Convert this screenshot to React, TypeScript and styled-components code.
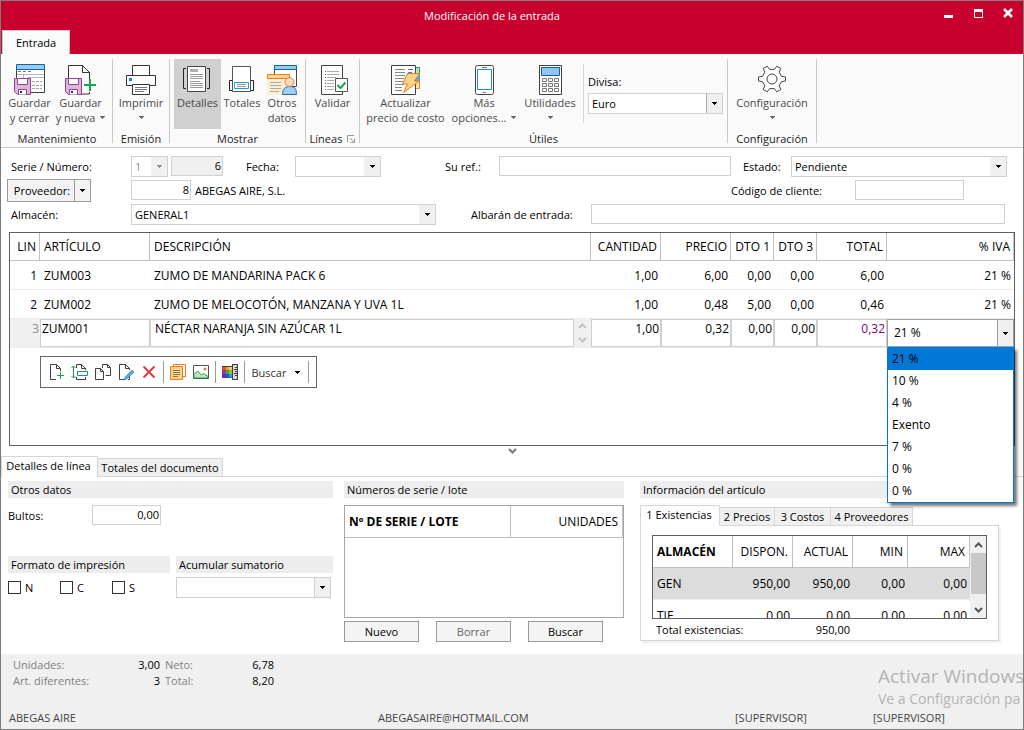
import React from "react";
import styled, { createGlobalStyle, css } from "styled-components";

const FONT = '"Open Sans", "Noto Sans", sans-serif';

const Global = createGlobalStyle`
  *, *::before, *::after { box-sizing: border-box; }
  html, body { margin: 0; padding: 0; }
  body { background: #fff; color: #000; font-family: ${FONT}; font-size: 11px; line-height: 15px; }
  button, input, select, textarea { font: inherit; color: inherit; margin: 0; border-radius: 0; }
`;

/* ---------- window frame ---------- */

const Window = styled.div`
  display: flex;
  flex-direction: column;
  min-height: 100vh;
  border: 1px solid #7d7d7d;
  background: #fff;
`;

const TitleBar = styled.header`
  display: grid;
  grid-template-columns: 1fr auto 1fr;
  height: 29px;
  color: #fff;
  background: #c8002d;
`;

const Title = styled.h1`
  grid-column: 2;
  margin: 0;
  padding-right: 40px;
  font-size: 11px;
  font-weight: 400;
  line-height: 29px;
`;

const WindowButtons = styled.div`
  display: flex;
  justify-content: flex-end;
  align-items: flex-start;
`;

const WindowButton = styled.button`
  width: 30px;
  height: 24px;
  padding: 0;
  border: 0;
  background: none;
  display: flex;
  align-items: center;
  justify-content: center;
`;

const RibbonTabs = styled.nav`
  display: flex;
  height: 24px;
  padding-left: 1px;
  background: #c8002d;
`;

const RibbonTab = styled.button`
  width: 68px;
  border: 1px solid #c8c8c8;
  border-bottom: 0;
  background: #fafafa;
  padding: 0;
`;

/* ---------- ribbon ---------- */

const Ribbon = styled.div`
  display: flex;
  height: 94px;
  padding: 5px 0 4px 1px;
  background: #fafafa;
  border-bottom: 1px solid #c6c6c6;
`;

const Group = styled.section<{ $w: number }>`
  display: flex;
  flex-direction: column;
  flex: none;
  width: ${(p) => p.$w}px;
  border-right: 1px solid #c9c9c9;
`;

const GroupBody = styled.div<{ $start?: boolean }>`
  display: flex;
  flex: 1;
  justify-content: ${(p) => (p.$start ? "flex-start" : "center")};
  padding-left: ${(p) => (p.$start ? 2 : 0)}px;
`;

const GroupLabel = styled.h2`
  display: flex;
  justify-content: center;
  align-items: center;
  gap: 5px;
  margin: 0;
  font-size: 11px;
  font-weight: 400;
  line-height: 8px;
  color: #222;
`;

const ToolButton = styled.button<{ $w: number; $on?: boolean }>`
  display: flex;
  flex-direction: column;
  align-items: center;
  width: ${(p) => p.$w}px;
  height: 70px;
  margin: 0;
  padding: 4px 0 0;
  border: 0;
  background: ${(p) => (p.$on ? "#d0d0d0" : "transparent")};
  color: #4a4a4a;
  line-height: 15px;
  white-space: nowrap;
  svg { flex: none; display: block; }
`;

const ToolCaption = styled.span`
  display: flex;
  align-items: center;
  gap: 5px;
  min-height: 15px;
`;

const CurrencyBox = styled.div`
  display: flex;
  flex-direction: column;
  justify-content: center;
  gap: 4px;
  width: 144px;
  height: 59px;
  margin-top: 5px;
  padding: 0 5px 0 4px;
  border-left: 1px solid #d8d8d8;
`;

/* ---------- form controls ---------- */

const fieldBox = css`
  border: 1px solid #d0d0d0;
  background: #fff;
`;

const Field = styled.input<{ $w?: number; $right?: boolean }>`
  ${fieldBox}
  ${(p) => (p.$w ? `flex: none; width: ${p.$w}px;` : "flex: 1; min-width: 0; width: 0;")}
  height: 20px;
  padding: 0 1px 1px 3px;
  text-align: ${(p) => (p.$right ? "right" : "left")};
  outline: none;
  &:read-only { background: #f0f0f0; }
`;

const ComboShell = styled.span<{ $w?: number }>`
  ${fieldBox}
  display: grid;
  grid-template: 1fr / 1fr;
  ${(p) => (p.$w ? `flex: none; width: ${p.$w}px;` : "flex: 1;")}
  height: 21px;
`;

const ComboSelect = styled.select`
  grid-area: 1 / 1;
  appearance: none;
  width: 100%;
  min-width: 0;
  padding: 0 18px 0 3px;
  border: 0;
  background: none;
  outline: none;
  &:disabled { color: #8a8a8a; opacity: 1; }
`;

const ComboArrow = styled.span<{ $line?: string }>`
  grid-area: 1 / 1;
  justify-self: end;
  display: flex;
  align-items: center;
  justify-content: center;
  width: 16px;
  pointer-events: none;
  background: #f0f0f0;
  border-left: ${(p) => (p.$line ? `1px solid ${p.$line}` : "0")};
`;

const Caret = ({ color = "#000" }: { color?: string }) => (
  <svg width="5" height="3" viewBox="0 0 5 3" aria-hidden="true" shapeRendering="crispEdges">
    <path d="M0 0h5v1H0zM1 1h3v1H1zM2 2h1v1H2z" fill={color} />
  </svg>
);

interface ComboProps {
  id: string;
  w?: number;
  value?: string;
  disabled?: boolean;
  line?: string;
  label?: string;
}

const Combo = ({ id, w, value = "", disabled, line, label }: ComboProps) => (
  <ComboShell $w={w}>
    <ComboSelect id={id} defaultValue={value} disabled={disabled} aria-label={label}>
      <option>{value}</option>
    </ComboSelect>
    <ComboArrow $line={line}>
      <Caret color={disabled ? "#8a8a8a" : "#000"} />
    </ComboArrow>
  </ComboShell>
);

const Form = styled.form`
  display: flex;
  flex-direction: column;
  padding: 6px 16px 0 10px;
`;

const FormRow = styled.div<{ $inset?: number }>`
  display: flex;
  align-items: center;
  height: 24px;
  padding-right: ${(p) => p.$inset ?? 0}px;
`;

const Label = styled.label<{ $w: number; $ml?: number }>`
  flex: none;
  width: ${(p) => p.$w}px;
  margin-left: ${(p) => p.$ml ?? 0}px;
  white-space: nowrap;
`;

const SeriesPair = styled.span`
  display: flex;
  align-items: center;
  gap: 3px;
`;

const SupplierName = styled.output`
  flex: 1;
  margin-left: 4px;
`;

const SplitButton = styled.div`
  display: flex;
  width: 84px;
  height: 23px;
  margin: 0 40px 0 -4px;
  border: 1px solid #9a9a9a;
  background: #f3f3f3;
`;

const SplitPart = styled.button`
  flex: 1;
  padding: 0 0 0 2px;
  border: 0;
  background: none;
  display: flex;
  align-items: center;
  justify-content: center;
  & + & { flex: none; width: 16px; padding: 0; border-left: 1px solid #9a9a9a; }
`;

/* ---------- lines grid ---------- */

const LinesBox = styled.section`
  flex: 1 0 214px;
  margin: 6px 8px 0;
  border: 1px solid #5f5f5f;
`;

const LinesTable = styled.table`
  width: 100%;
  table-layout: fixed;
  border-collapse: separate;
  border-spacing: 0;
  font-size: 12px;
  th {
    height: 28px;
    padding: 0 4px;
    border-right: 1px solid #c0c0c0;
    border-bottom: 1px solid #c0c0c0;
    font-weight: 400;
    text-align: left;
    white-space: nowrap;
  }
  td {
    height: 29px;
    padding: 0 4px;
    border-bottom: 1px solid #ececec;
    white-space: nowrap;
  }
  .num { text-align: right; padding-right: 3px; }
`;

const EditRow = styled.tr`
  td {
    padding: 0;
    background: #f0f0f0;
    vertical-align: top;
  }
`;

const EditNumber = styled.div`
  padding: 2px 1px 0 0;
  text-align: right;
  color: #8a8a8a;
`;

const CellInput = styled.input<{ $num?: boolean; $color?: string }>`
  ${fieldBox}
  display: block;
  width: 100%;
  height: 28px;
  padding: 0 1px 9px;
  border-color: #cfcfcf;
  outline: none;
  text-align: ${(p) => (p.$num ? "right" : "left")};
  color: ${(p) => p.$color ?? "#000"};
`;

const DescriptionCell = styled.div`
  display: flex;
`;

const DescriptionText = styled.textarea`
  ${fieldBox}
  flex: 1;
  display: block;
  height: 28px;
  padding: 1px 4px;
  resize: none;
  outline: none;
  overflow: hidden;
`;

const Spinner = styled.div`
  display: flex;
  flex-direction: column;
  align-items: center;
  justify-content: space-around;
  width: 17px;
`;

const VatCell = styled.div`
  position: relative;
`;

const VatCombo = styled.button`
  display: flex;
  align-items: stretch;
  justify-content: space-between;
  width: 100%;
  height: 28px;
  padding: 0 0 0 6px;
  border: 1px solid #a0a0a0;
  background: #fff;
  line-height: 26px;
`;

const VatArrow = styled.span`
  display: flex;
  align-items: center;
  justify-content: center;
  width: 16px;
  border-left: 1px solid #a0a0a0;
  background: #f0f0f0;
`;

const VatList = styled.ul`
  position: absolute;
  z-index: 2;
  top: 28px;
  left: 0;
  right: 0;
  margin: 0;
  padding: 0;
  list-style: none;
  border: 1px solid #0078d7;
  background: #fff;
  box-shadow: 3px 3px 3px rgba(0, 0, 0, 0.55);
`;

const VatOption = styled.li<{ $active?: boolean }>`
  height: 22px;
  padding-left: 4px;
  line-height: 22px;
  background: ${(p) => (p.$active ? "#0078d7" : "transparent")};
`;

const LineTools = styled.div`
  display: inline-flex;
  align-items: center;
  height: 32px;
  margin: 8px 0 0 30px;
  padding: 0 5px 0 4px;
  border: 1px solid #666;
  vertical-align: top;
`;

const LineTool = styled.button<{ $w?: number }>`
  display: flex;
  align-items: center;
  justify-content: center;
  width: ${(p) => p.$w ?? 23}px;
  height: 24px;
  padding: 0;
  gap: 9px;
  border: 0;
  background: none;
  color: #333;
`;

const ToolRule = styled.span`
  width: 1px;
  height: 22px;
  margin: 0 2px 0 3px;
  background: #9b9b9b;
`;

const Collapse = styled.button`
  display: flex;
  align-items: center;
  justify-content: center;
  height: 10px;
  padding: 0;
  border: 0;
  background: none;
`;

/* ---------- tabs ---------- */

const TabStrip = styled.div`
  display: flex;
  align-items: flex-end;
  height: 21px;
  border-bottom: 1px solid #d6d6d6;
`;

const Tab = styled.button<{ $w: number; $on?: boolean }>`
  width: ${(p) => p.$w}px;
  height: ${(p) => (p.$on ? 21 : 18)}px;
  margin-bottom: ${(p) => (p.$on ? -1 : 0)}px;
  padding: ${(p) => (p.$on ? "0 2px 3px 0" : "0")};
  border: 1px solid #d6d6d6;
  border-bottom: 0;
  border-left-width: ${(p) => (p.$on ? 1 : 0)}px;
  background: ${(p) => (p.$on ? "#fff" : "#f0f0f0")};
  white-space: nowrap;
`;

/* ---------- bottom panels ---------- */

const Panels = styled.div`
  display: grid;
  grid-template-columns: 325fr 280fr 364fr;
  column-gap: 11px;
  padding: 4px 24px 12px 7px;
`;

const Panel = styled.section<{ $indent?: boolean }>`
  display: flex;
  flex-direction: column;
  min-width: 0;
  padding-left: ${(p) => (p.$indent ? 5 : 0)}px;
`;

const PanelTitle = styled.h3`
  margin: 0;
  padding-left: 3px;
  font-size: 11px;
  font-weight: 400;
  line-height: 17px;
  background: #ededed;
`;

const PackagesRow = styled.div`
  display: flex;
  align-items: center;
  height: 34px;
`;

const HalfColumns = styled.div`
  display: grid;
  grid-template-columns: 162fr 157fr;
  column-gap: 6px;
  margin-top: 24px;
`;

const Checks = styled.div`
  display: flex;
  padding-top: 8px;
`;

const CheckLabel = styled.label`
  display: flex;
  align-items: center;
  gap: 4px;
  width: 52px;
  height: 13px;
`;

const CheckBox = styled.input`
  appearance: none;
  width: 13px;
  height: 13px;
  border: 1px solid #333;
  background: #fff;
`;

const SumRow = styled.div`
  display: flex;
  padding: 4px 2px 0 0;
`;

const SerialBox = styled.div`
  height: 113px;
  margin-top: 7px;
  border: 1px solid #a6a6a6;
`;

const DataTable = styled.table`
  width: 100%;
  table-layout: fixed;
  border-collapse: separate;
  border-spacing: 0;
  font-size: 12px;
  th {
    height: 32px;
    padding: 0 4px;
    border-right: 1px solid #c0c0c0;
    border-bottom: 1px solid #c0c0c0;
    font-weight: 400;
    text-align: right;
    white-space: nowrap;
  }
  th:first-child { font-weight: 700; text-align: left; }
  td { height: 32px; padding: 0 3px; text-align: right; border-bottom: 1px solid #ececec; }
  td:first-child { text-align: left; padding-left: 4px; }
`;

const SelectedRow = styled.tr`
  td { background: #dcdcdc; }
`;

const ButtonRow = styled.div`
  display: flex;
  gap: 17px;
  margin-top: 3px;
`;

const PushButton = styled.button`
  width: 75px;
  height: 21px;
  padding: 0;
  border: 1px solid #999;
  background: #f4f4f4;
  &:disabled { color: #666; }
`;

const InnerTabs = styled(TabStrip)`
  margin-top: 7px;
`;

const StockBox = styled.div`
  padding: 9px 11px 1px;
  border: 1px solid #d6d6d6;
  border-top: 0;
  box-shadow: 2px 2px 0 #f0f0f0;
`;

const StockGrid = styled.div`
  display: flex;
  height: 84px;
  overflow: hidden;
  border: 1px solid #5f5f5f;
`;

const StockScroll = styled.div`
  flex: 1;
  min-width: 0;
  overflow: hidden;
`;

const ScrollBar = styled.div`
  display: flex;
  flex-direction: column;
  justify-content: space-between;
  align-items: center;
  width: 16px;
  background: #f0f0f0;
`;

const ScrollStep = styled.button`
  display: flex;
  align-items: center;
  justify-content: center;
  width: 15px;
  height: 17px;
  padding: 0;
  border: 0;
  background: none;
`;

const ScrollThumb = styled.div`
  width: 15px;
  height: 41px;
  margin-bottom: 7px;
  background: #c8c8c8;
`;

const StockTotal = styled.div`
  display: flex;
  height: 20px;
  padding-left: 4px;
  line-height: 22px;
`;

const TotalText = styled.span`
  flex: none;
  width: 130px;
`;

const TotalValue = styled.output`
  flex: none;
  width: 64px;
  text-align: right;
`;

/* ---------- footer ---------- */

const Footer = styled.footer`
  position: relative;
  display: flex;
  flex-direction: column;
  justify-content: space-between;
  height: 75px;
  padding: 3px 0 4px 8px;
  background: #f0f0f0;
`;

const Summary = styled.dl`
  display: grid;
  grid-template-columns: 88px 59px 50px 64px;
  margin: 0 0 0 4px;
  line-height: 16px;
  dt { color: #808080; white-space: nowrap; }
  dt:nth-of-type(even) { padding-left: 5px; }
  dd { margin: 0; text-align: right; }
`;

const Status = styled.div`
  display: grid;
  grid-template-columns: 369fr 357fr 138fr 150fr;
  color: #444;
`;

const Watermark = styled.div`
  position: absolute;
  top: 10px;
  right: 0;
  width: 145px;
  overflow: hidden;
  white-space: nowrap;
  color: #b4b4b4;
  font-size: 14px;
  line-height: 22px;
  strong { display: block; font-size: 19px; font-weight: 400; line-height: 24px; }
`;

/* ---------- icons ---------- */

const Chevron = ({ up, color }: { up?: boolean; color: string }) => (
  <svg width="9" height="6" viewBox="0 0 9 6" fill="none" stroke={color} strokeWidth="2" aria-hidden="true">
    <path d={up ? "M1 5l3.500-3.500L8 5" : "M1 1l3.500 3.500L8 1"} />
  </svg>
);

const Big = ({ children }: { children: React.ReactNode }) => (
  <svg width="32" height="32" viewBox="0 0 32 32" fill="none" aria-hidden="true">{children}</svg>
);

const Floppy = () => (
  <>
    <path d="M.5 15.500h16v16H3.500l-3-3z" fill="#dcb4dc" stroke="#93449a" />
    <path d="M3.500 15.500h10v6h-10z" fill="#fff" stroke="#93449a" />
    <path d="M4.500 31.500v-5h8v5" fill="#fff" stroke="#93449a" />
    <path d="M6 28h2v2H6z" fill="#333" />
  </>
);

const IconSaveClose = () => (
  <Big>
    <path d="M2.500 6.500h28v23h-28z" fill="#fff" stroke="#404040" />
    <path d="M2.500 1.500h28v5h-28z" fill="#9ccbf0" stroke="#0a64ae" />
    <path d="M4 8.500h3M9 8.500h3M14 8.500h3" stroke="#777" />
    <path d="M3 11.500h27M9.500 12v4M14 14.500h16" stroke="#b5b5b5" />
    <path d="M18 18.500h10M18 22.500h10M18 25.500h10" stroke="#a5a5a5" strokeDasharray="3 1" />
    <Floppy />
  </Big>
);

const IconSaveNew = () => (
  <Big>
    <path d="M3.500 31V2.500h14l7 7V31z" fill="#fff" stroke="#333" />
    <path d="M17.500 2.500v7h7z" fill="#fff" stroke="#333" />
    <path d="M23 16h8v13h-8z" fill="#fafafa" />
    <Floppy />
    <path d="M19 22h12M25 16v12" stroke="#12a84c" strokeWidth="2" />
  </Big>
);

const IconPrint = () => (
  <Big>
    <path d="M7.500 12V2.500h17V12" fill="#fff" stroke="#333" />
    <path d="M1.500 12.500h29v10h-29z" fill="#fff" stroke="#333" />
    <path d="M4 15h3v3H4z" fill="#1e82cf" />
    <path d="M7.500 21.500h17v10h-17z" fill="#fff" stroke="#333" />
    <path d="M10 24.500h12M10 26.500h12M10 28.500h9" stroke="#777" />
  </Big>
);

const IconDetails = () => (
  <Big>
    <path d="M5.500 3.500h18v25h-18z" fill="#fff" stroke="#444" />
    <path d="M4 5.500H1.500v20H4M25 5.500h2.500v20H25" stroke="#222" />
    <path d="M8 6h8v3H8z" fill="#b0b0b0" />
    <path d="M8 11.500h13M8 13.500h13M8 15.500h13M8 18.500h10M8 20.500h13M8 22.500h13M8 24.500h13" stroke="#999" />
  </Big>
);

const IconTotals = () => (
  <Big>
    <path d="M6.500 3.500h18v25h-18z" fill="#fff" stroke="#555" />
    <path d="M6 17.500H3.500v10H6M25 17.500h2.500v10H25" stroke="#222" />
    <path d="M8.500 19.500h14v6h-14z" fill="#fff" stroke="#1e9be6" />
    <path d="M11 21.500h9M11 23.500h9" stroke="#999" />
  </Big>
);

const IconOther = () => (
  <Big>
    <path d="M8.500 3.500h22v20h-22z" fill="#fff" stroke="#444" />
    <path d="M8.500 2.500h22v4h-22z" fill="#9ccbf0" stroke="#0a64ae" />
    <path d="M1 12h22v20H1z" fill="#fbeed3" />
    <path d="M1.500 11.500h22v4h-22z" fill="#fbd48b" stroke="#ea7a22" />
    <path d="M4 19.500h11M4 22.500h11M4 25.500h11M4 28.500h9" stroke="#aaa" />
    <path d="M16.500 31.500c0-6 3-8 7.500-8s6.500 2 6.500 8z" fill="#a3cef0" stroke="#1c70b8" />
    <circle cx="23.500" cy="19" r="4.500" fill="#fbd9bd" stroke="#c98a5a" />
  </Big>
);

const IconValidate = () => (
  <Big>
    <path d="M4.500 2.500h21v29h-21z" fill="#fff" stroke="#444" />
    <path d="M8 8.500h1M8 17.500h1M8 26.500h1" stroke="#12a84c" />
    <path d="M8 11.500h1M8 14.500h1M8 20.500h1M8 23.500h1" stroke="#e02b2b" />
    <path d="M10 8.500h12M10 11.500h12M10 14.500h9M10 17.500h7M10 20.500h7M10 23.500h7M10 26.500h7" stroke="#aaa" />
    <path d="M18.500 15.500h12v13h-12z" fill="#fff" stroke="#555" />
    <path d="M20.500 22l3 3 5-5.500" stroke="#12a84c" strokeWidth="2" />
  </Big>
);

const IconUpdate = () => (
  <Big>
    <path d="M20 4.500h9.500v7H20z" fill="#b7e3bd" stroke="#1f9a45" />
    <path d="M20 11h10v8H20z" fill="#52a8ec" />
    <path d="M20.500 18.500h9v7h-9z" fill="#fde3a5" stroke="#ea8a22" />
    <path d="M1.500 2.500h24v29h-24z" fill="#fff" stroke="#404040" />
    <path d="M5 6.500h10M5 9.500h10M5 12.500h10M5 15.500h9M5 18.500h8M5 21.500h9M5 24.500h7M5 27.500h7" stroke="#888" />
    <path d="M18 6.500h5M18 9.500h4" stroke="#2b83c8" />
    <path d="M17.500 10.500h12l-5 7.500h5L13.500 29.500l4-8.500h-5z" fill="#fbd48b" stroke="#ea7a22" />
  </Big>
);

const IconPhone = () => (
  <Big>
    <rect x="7.500" y="2.500" width="18" height="29" rx="2" fill="#fff" stroke="#444" />
    <path d="M9.500 6.500h14v20h-14z" fill="#fff" stroke="#1e88d8" />
    <path d="M14 4.500h5M15 29.500h3" stroke="#777" />
  </Big>
);

const IconCalc = () => (
  <Big>
    <path d="M5.500 2.500h22v29h-22z" fill="#fff" stroke="#404040" />
    <path d="M7.500 4.500h18v8h-18z" fill="#92c6ee" stroke="#0a64ae" />
    <path
      d="M8.500 15.500h4v3h-4zM14.500 15.500h4v3h-4zM20.500 15.500h4v3h-4zM8.500 20.500h4v3h-4zM14.500 20.500h4v3h-4zM20.500 20.500h4v3h-4zM8.500 25.500h4v3h-4zM14.500 25.500h4v3h-4zM20.500 25.500h4v3h-4z"
      stroke="#777"
    />
  </Big>
);

const IconGear = () => (
  <Big>
    <path
      d="M29.500 14V18L25.500 18.700L23.100 22.900L24.800 26.500L20.800 28.800L18.400 25.600H13.600L11.200 28.800L7.200 26.500L8.900 22.900L6.500 18.700L2.500 18V14L6.500 13.300L8.900 9.100L7.200 5.500L11.200 3.200L13.600 6.400H18.400L20.800 3.200L24.800 5.500L23.100 9.100L25.500 13.300Z"
      fill="#fff" stroke="#444" strokeLinejoin="round"
    />
    <circle cx="16" cy="16" r="5" fill="#fafafa" stroke="#444" />
  </Big>
);

const Small = ({ children }: { children: React.ReactNode }) => (
  <svg width="18" height="18" viewBox="0 0 18 18" fill="none" aria-hidden="true">{children}</svg>
);

const IconAdd = () => (
  <Small>
    <path d="M8 16.500H2.500v-15h6l4 4V8M8.500 1.500v4h4" stroke="#404040" />
    <path d="M9 12.500h7M12.500 9v7" stroke="#12a84c" />
  </Small>
);
const IconInsert = () => (
  <Small>
    <path d="M5.500 5V1.500h5l4 4V7M10.500 1.500v4h4M5.500 14v2.500h9V14" stroke="#404040" />
    <path d="M6.500 8.500h10v4h-10z" fill="#fff" stroke="#1e82cf" />
    <path d="M2.500 3v12M.5 5l2-2 2 2M.5 13l2 2 2-2" stroke="#12a84c" />
  </Small>
);
const IconCopy = () => (
  <Small>
    <path d="M8.500 5V1.500h5l3 3v8h-5M13.500 1.500v3h3" stroke="#404040" />
    <path d="M1.500 5.500h5l3 3v8h-8zM6.500 5.500v3h3" fill="#fff" stroke="#404040" />
  </Small>
);
const IconEdit = () => (
  <Small>
    <path d="M8 16.500H2.500v-15h6l4 4V7M8.500 1.500v4h4M12.500 13v3.500H11" stroke="#404040" />
    <path d="M8 14l7-7 2 2-7 7-3 1z" fill="#5aa7e0" stroke="#1e78c0" strokeWidth=".5" />
  </Small>
);
const IconDelete = () => (
  <Small>
    <path d="M3.500 3.500l11 11M14.500 3.500l-11 11" stroke="#e83a3a" strokeWidth="2" />
  </Small>
);
const IconNotes = () => (
  <Small>
    <path d="M4.500 3V1.500h12v12H14" stroke="#ea7a22" />
    <path d="M1.500 3.500h12v13h-12z" fill="#fbd48b" stroke="#ea7a22" />
    <path d="M4 7.500h7M4 9.500h7M4 11.500h7M4 13.500h5" stroke="#8a7650" />
  </Small>
);
const IconImage = () => (
  <Small>
    <path d="M1.500 2.500h15v13h-15z" fill="#fff" stroke="#505050" />
    <path d="M2 11.500l3.500-3.500 4 4 2-1.500 4.500 3V15H2z" fill="#bfe6c4" stroke="#1f9a45" />
    <circle cx="13" cy="6" r="1.500" fill="#ea7a22" />
  </Small>
);
const IconColors = () => (
  <Small>
    <path d="M1 3h11v12H1zM11 1h6v16h-6z" fill="#404040" />
    <path d="M1 4h3.500v3.500H1z" fill="#ef4030" />
    <path d="M4.500 4H8v3.500H4.500z" fill="#f59a23" />
    <path d="M8 4h3v3.500H8z" fill="#f7d83b" />
    <path d="M1 7.500h3.500V11H1z" fill="#a02bb0" />
    <path d="M4.500 7.500H8V11H4.500z" fill="#2fb04a" />
    <path d="M8 7.500h3V11H8z" fill="#8cc63f" />
    <path d="M1 11h3.500v3.500H1z" fill="#6a2bd0" />
    <path d="M4.500 11H8v3.500H4.500z" fill="#2b4fd0" />
    <path d="M8 11h3v3.500H8z" fill="#25a0e0" />
    <path d="M12 2h4v14h-4z" fill="#d5d5d5" />
    <path d="M14 4.500h2M13 6.500h3M14 8.500h2M13 10.500h3M14 12.500h2" stroke="#404040" />
  </Small>
);

/* ---------- data ---------- */

const vatRates = ["21 %", "10 %", "4 %", "Exento", "7 %", "0 %", "0 %"];

const lines = [
  ["1", "ZUM003", "ZUMO DE MANDARINA PACK 6", "1,00", "6,00", "0,00", "0,00", "6,00", "21 %"],
  ["2", "ZUM002", "ZUMO DE MELOCOTÓN, MANZANA Y UVA 1L", "1,00", "0,48", "5,00", "0,00", "0,46", "21 %"],
];

const columns = [
  { name: "LIN", w: 30, num: true },
  { name: "ARTÍCULO", w: 110 },
  { name: "DESCRIPCIÓN" },
  { name: "CANTIDAD", w: 70, num: true },
  { name: "PRECIO", w: 70, num: true },
  { name: "DTO 1", w: 43, num: true },
  { name: "DTO 3", w: 43, num: true },
  { name: "TOTAL", w: 70, num: true },
  { name: "% IVA", w: 127, num: true },
];

interface ToolProps {
  icon: React.ReactNode;
  first: string;
  second?: string;
  w: number;
  menu?: boolean;
  on?: boolean;
}

const Tool = ({ icon, first, second, w, menu, on }: ToolProps) => (
  <ToolButton type="button" $w={w} $on={on} aria-pressed={on}>
    {icon}
    <ToolCaption>{first}</ToolCaption>
    <ToolCaption>
      {second}
      {menu && <Caret color="#6a6a6a" />}
    </ToolCaption>
  </ToolButton>
);

export default function App() {
  return (
    <Window>
      <Global />
      <TitleBar>
        <Title>Modificación de la entrada</Title>
        <WindowButtons>
          <WindowButton aria-label="Minimizar">
            <svg width="9" height="10" viewBox="0 0 9 10"><path d="M0 7h9v3H0z" fill="#fff" /></svg>
          </WindowButton>
          <WindowButton aria-label="Maximizar">
            <svg width="9" height="10" viewBox="0 0 9 10"><path d="M0 1h9v9H0zM1 4v5h7V4z" fill="#fff" fillRule="evenodd" /></svg>
          </WindowButton>
          <WindowButton aria-label="Cerrar">
            <svg width="10" height="10" viewBox="0 0 10 10"><path d="M1 1l8 8M9 1L1 9" stroke="#fff" strokeWidth="2.500" /></svg>
          </WindowButton>
        </WindowButtons>
      </TitleBar>
      <RibbonTabs>
        <RibbonTab>Entrada</RibbonTab>
      </RibbonTabs>

      <Ribbon>
        <Group $w={111}>
          <GroupBody $start>
            <Tool icon={<IconSaveClose />} first="Guardar" second="y cerrar" w={51} />
            <Tool icon={<IconSaveNew />} first="Guardar" second="y nueva" w={51} menu />
          </GroupBody>
          <GroupLabel>Mantenimiento</GroupLabel>
        </Group>
        <Group $w={57}>
          <GroupBody>
            <Tool icon={<IconPrint />} first="Imprimir" w={50} menu />
          </GroupBody>
          <GroupLabel>Emisión</GroupLabel>
        </Group>
        <Group $w={136}>
          <GroupBody>
            <Tool icon={<IconDetails />} first="Detalles" w={47} on />
            <Tool icon={<IconTotals />} first="Totales" w={42} />
            <Tool icon={<IconOther />} first="Otros" second="datos" w={38} />
          </GroupBody>
          <GroupLabel>Mostrar</GroupLabel>
        </Group>
        <Group $w={54}>
          <GroupBody>
            <Tool icon={<IconValidate />} first="Validar" w={50} />
          </GroupBody>
          <GroupLabel>
            Líneas
            <svg width="8" height="8" viewBox="0 0 8 8" fill="none" stroke="#999" aria-hidden="true">
              <path d="M.5 7V.5H7M3 3l4 4M7.500 3.500v4h-4" />
            </svg>
          </GroupLabel>
        </Group>
        <Group $w={368}>
          <GroupBody>
            <Tool icon={<IconUpdate />} first="Actualizar" second="precio de costo" w={91} />
            <Tool icon={<IconPhone />} first="Más" second="opciones..." w={66} menu />
            <Tool icon={<IconCalc />} first="Utilidades" w={66} menu />
            <CurrencyBox>
              <label htmlFor="divisa">Divisa:</label>
              <Combo id="divisa" w={135} value="Euro" line="#a8a8a8" />
            </CurrencyBox>
          </GroupBody>
          <GroupLabel>Útiles</GroupLabel>
        </Group>
        <Group $w={89}>
          <GroupBody>
            <Tool icon={<IconGear />} first="Configuración" w={84} menu />
          </GroupBody>
          <GroupLabel>Configuración</GroupLabel>
        </Group>
      </Ribbon>

      <Form>
        <FormRow>
          <Label htmlFor="serie" $w={120}>Serie / Número:</Label>
          <SeriesPair>
            <Combo id="serie" w={37} value="1" disabled />
            <Field aria-label="Número" $w={52} $right readOnly defaultValue="6" />
          </SeriesPair>
          <Label htmlFor="fecha" $w={49} $ml={23}>Fecha:</Label>
          <Combo id="fecha" w={86} />
          <Label htmlFor="ref" $w={54} $ml={64}>Su ref.:</Label>
          <Field id="ref" />
          <Label htmlFor="estado" $w={48} $ml={12}>Estado:</Label>
          <Combo id="estado" w={216} value="Pendiente" />
        </FormRow>
        <FormRow $inset={43}>
          <SplitButton>
            <SplitPart type="button">Proveedor:</SplitPart>
            <SplitPart type="button" aria-label="Opciones de proveedor"><Caret /></SplitPart>
          </SplitButton>
          <Field aria-label="Proveedor" $w={60} $right defaultValue="8" />
          <SupplierName>ABEGAS AIRE, S.L.</SupplierName>
          <Label htmlFor="codigo" $w={124}>Código de cliente:</Label>
          <Field id="codigo" $w={109} />
        </FormRow>
        <FormRow $inset={2}>
          <Label htmlFor="almacen" $w={120}>Almacén:</Label>
          <Combo id="almacen" w={305} value="GENERAL1" />
          <Label htmlFor="albaran" $w={120} $ml={35}>Albarán de entrada:</Label>
          <Field id="albaran" />
        </FormRow>
      </Form>

      <LinesBox>
        <LinesTable>
          <colgroup>
            {columns.map((c) => <col key={c.name} width={c.w} />)}
          </colgroup>
          <thead>
            <tr>
              {columns.map((c) => <th key={c.name} className={c.num ? "num" : undefined}>{c.name}</th>)}
            </tr>
          </thead>
          <tbody>
            {lines.map((row) => (
              <tr key={row[0]}>
                {row.map((cell, i) => <td key={i} className={columns[i].num ? "num" : undefined}>{cell}</td>)}
              </tr>
            ))}
            <EditRow>
              <td><EditNumber>3</EditNumber></td>
              <td><CellInput aria-label="Artículo" defaultValue="ZUM001" /></td>
              <td>
                <DescriptionCell>
                  <DescriptionText aria-label="Descripción" defaultValue="NÉCTAR NARANJA SIN AZÚCAR 1L" />
                  <Spinner><Chevron up color="#c4c4c4" /><Chevron color="#c4c4c4" /></Spinner>
                </DescriptionCell>
              </td>
              <td><CellInput aria-label="Cantidad" $num defaultValue="1,00" /></td>
              <td><CellInput aria-label="Precio" $num defaultValue="0,32" /></td>
              <td><CellInput aria-label="Descuento 1" $num defaultValue="0,00" /></td>
              <td><CellInput aria-label="Descuento 3" $num defaultValue="0,00" /></td>
              <td><CellInput aria-label="Total" $num $color="#800080" defaultValue="0,32" /></td>
              <td>
                <VatCell>
                  <VatCombo type="button" role="combobox" aria-label="IVA" aria-expanded="true" aria-controls="iva-lista">
                    21 %
                    <VatArrow><Caret /></VatArrow>
                  </VatCombo>
                  <VatList id="iva-lista" role="listbox">
                    {vatRates.map((rate, i) => (
                      <VatOption key={i} role="option" aria-selected={i === 0} $active={i === 0}>{rate}</VatOption>
                    ))}
                  </VatList>
                </VatCell>
              </td>
            </EditRow>
          </tbody>
        </LinesTable>
        <LineTools role="toolbar">
          <LineTool aria-label="Nueva línea"><IconAdd /></LineTool>
          <LineTool aria-label="Insertar línea"><IconInsert /></LineTool>
          <LineTool aria-label="Duplicar línea"><IconCopy /></LineTool>
          <LineTool aria-label="Modificar línea"><IconEdit /></LineTool>
          <LineTool aria-label="Eliminar línea"><IconDelete /></LineTool>
          <ToolRule />
          <LineTool aria-label="Notas"><IconNotes /></LineTool>
          <LineTool aria-label="Imagen"><IconImage /></LineTool>
          <ToolRule />
          <LineTool aria-label="Tallas y colores"><IconColors /></LineTool>
          <ToolRule />
          <LineTool $w={58}>Buscar <Caret /></LineTool>
          <ToolRule />
        </LineTools>
      </LinesBox>
      <Collapse aria-label="Contraer"><Chevron color="#777" /></Collapse>

      <TabStrip role="tablist">
        <Tab role="tab" aria-selected="true" $w={97} $on>Detalles de línea</Tab>
        <Tab role="tab" aria-selected="false" $w={125}>Totales del documento</Tab>
      </TabStrip>

      <Panels>
        <Panel>
          <PanelTitle>Otros datos</PanelTitle>
          <PackagesRow>
            <Label htmlFor="bultos" $w={84}>Bultos:</Label>
            <Field id="bultos" $w={69} $right defaultValue="0,00" />
          </PackagesRow>
          <HalfColumns>
            <div>
              <PanelTitle>Formato de impresión</PanelTitle>
              <Checks>
                {["N", "C", "S"].map((c) => (
                  <CheckLabel key={c}><CheckBox type="checkbox" />{c}</CheckLabel>
                ))}
              </Checks>
            </div>
            <div>
              <PanelTitle>Acumular sumatorio</PanelTitle>
              <SumRow><Combo id="acumular" label="Acumular sumatorio" line="#d0d0d0" /></SumRow>
            </div>
          </HalfColumns>
        </Panel>

        <Panel>
          <PanelTitle>Números de serie / lote</PanelTitle>
          <SerialBox>
            <DataTable>
              <colgroup><col width={166} /><col /></colgroup>
              <thead><tr><th>Nº DE SERIE / LOTE</th><th>UNIDADES</th></tr></thead>
            </DataTable>
          </SerialBox>
          <ButtonRow>
            <PushButton>Nuevo</PushButton>
            <PushButton disabled>Borrar</PushButton>
            <PushButton>Buscar</PushButton>
          </ButtonRow>
        </Panel>

        <Panel $indent>
          <PanelTitle>Información del artículo</PanelTitle>
          <InnerTabs role="tablist">
            <Tab role="tab" aria-selected="true" $w={80} $on>1 Existencias</Tab>
            <Tab role="tab" aria-selected="false" $w={55}>2 Precios</Tab>
            <Tab role="tab" aria-selected="false" $w={56}>3 Costos</Tab>
            <Tab role="tab" aria-selected="false" $w={82}>4 Proveedores</Tab>
          </InnerTabs>
          <StockBox>
            <StockGrid>
              <StockScroll>
                <DataTable>
                  <colgroup><col /><col width={60} /><col width={60} /><col width={55} /><col width={62} /></colgroup>
                  <thead><tr><th>ALMACÉN</th><th>DISPON.</th><th>ACTUAL</th><th>MIN</th><th>MAX</th></tr></thead>
                  <tbody>
                    <SelectedRow><td>GEN</td><td>950,00</td><td>950,00</td><td>0,00</td><td>0,00</td></SelectedRow>
                    <tr><td>TIE</td><td>0,00</td><td>0,00</td><td>0,00</td><td>0,00</td></tr>
                  </tbody>
                </DataTable>
              </StockScroll>
              <ScrollBar>
                <ScrollStep aria-label="Subir"><Chevron up color="#555" /></ScrollStep>
                <ScrollThumb />
                <ScrollStep aria-label="Bajar"><Chevron color="#555" /></ScrollStep>
              </ScrollBar>
            </StockGrid>
            <StockTotal>
              <TotalText>Total existencias:</TotalText>
              <TotalValue>950,00</TotalValue>
            </StockTotal>
          </StockBox>
        </Panel>
      </Panels>

      <Footer>
        <Summary>
          <dt>Unidades:</dt><dd>3,00</dd><dt>Neto:</dt><dd>6,78</dd>
          <dt>Art. diferentes:</dt><dd>3</dd><dt>Total:</dt><dd>8,20</dd>
        </Summary>
        <Status>
          <span>ABEGAS AIRE</span>
          <span>ABEGASAIRE@HOTMAIL.COM</span>
          <span>[SUPERVISOR]</span>
          <span>[SUPERVISOR]</span>
        </Status>
        <Watermark>
          <strong>Activar Windows</strong>
          Ve a Configuración pa
        </Watermark>
      </Footer>
    </Window>
  );
}
